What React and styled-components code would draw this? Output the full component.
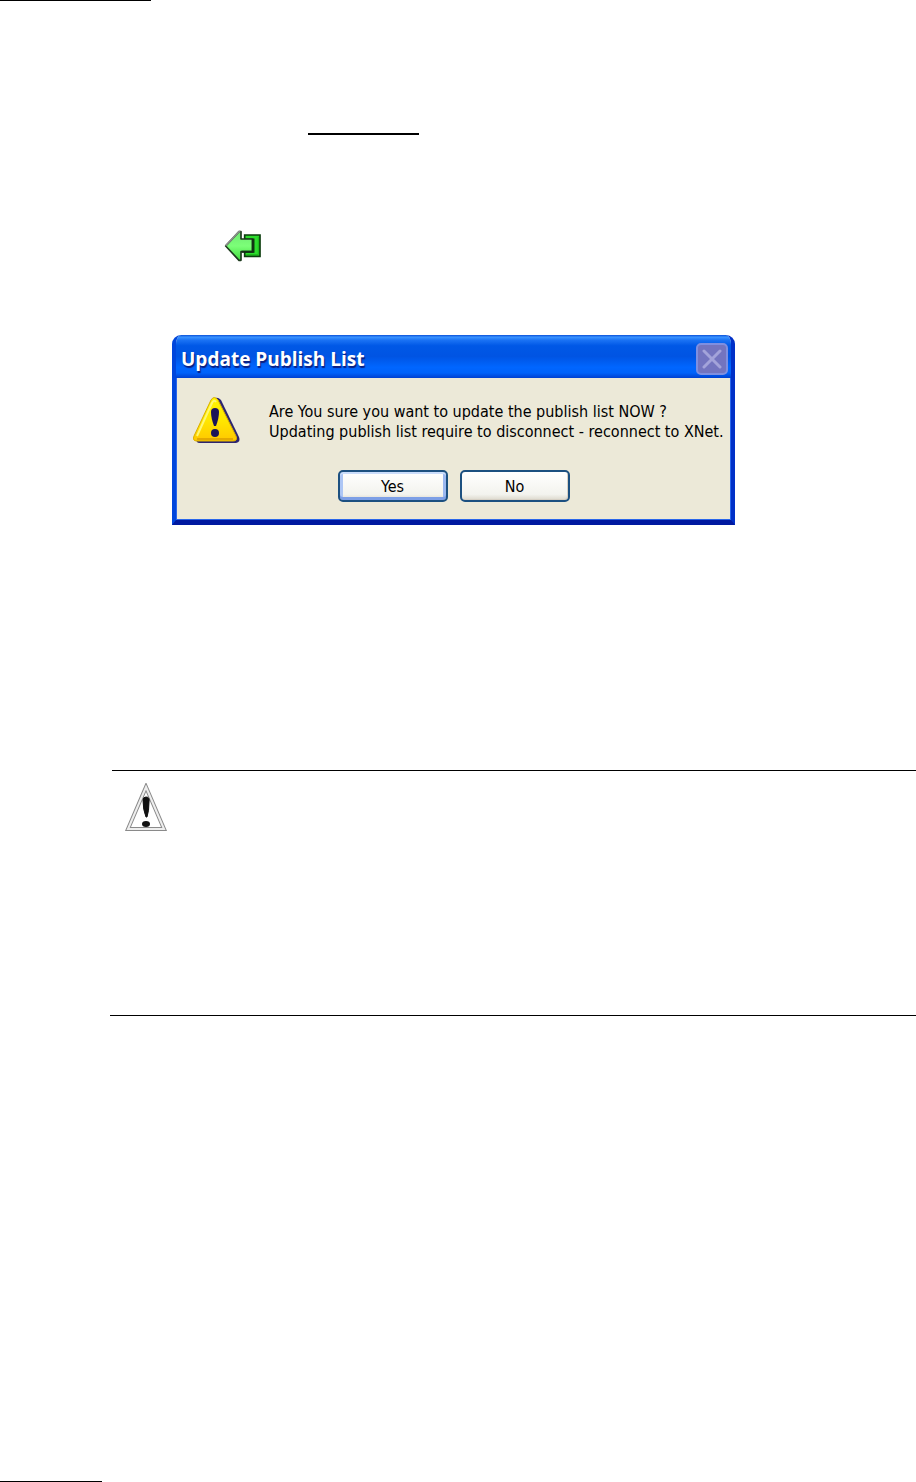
import styled, { createGlobalStyle } from "styled-components";

export default function App() {
    return (
        <>
        <GlobalStyle />
        <Page>
            <Rule $width={151} />
            <Heading>
                <Rule $width={111} $thick={2} />
            </Heading>
            <Step>
                <ArrowIcon />
            </Step>
            <DialogRow>
                <PublishDialog />
            </DialogRow>
            <Note>
                <NoteRule $indent={2} />
                <NoteBody>
                    <CautionIcon />
                </NoteBody>
                <NoteRule />
            </Note>
            <Footer>
                <Rule $width={102} />
            </Footer>
        </Page>
        </>
    )
}

function PublishDialog() {
    return (
        <Dialog role="alertdialog" aria-labelledby="dialog-title" aria-describedby="dialog-text">
            <TitleBar>
                <Title id="dialog-title">Update Publish List</Title>
                <CloseButton type="button" aria-label="Close" disabled>
                    <svg width="20" height="20" viewBox="0 0 20 20">
                        <path d="M2 2L18 18M18 2L2 18" stroke="#a3a3da" strokeWidth="3" strokeLinecap="round" />
                    </svg>
                </CloseButton>
            </TitleBar>
            <Content>
                <MessageRow>
                    <WarningIcon />
                    <Message id="dialog-text">
                        Are You sure you want to update the publish list NOW ?<br />
                        Updating publish list require to disconnect - reconnect to XNet.
                    </Message>
                </MessageRow>
                <Buttons>
                    <Button type="button" $primary>Yes</Button>
                    <Button type="button">No</Button>
                </Buttons>
            </Content>
        </Dialog>
    )
}

function ArrowIcon() {
    return (
        <svg width="38" height="32" viewBox="27 24 114 96" aria-hidden="true">
            <defs>
                <linearGradient id="arrow" x1="0" y1="0" x2="0" y2="1">
                    <stop offset="0" stopColor="#6fe873" />
                    <stop offset="0.5" stopColor="#7cff78" />
                    <stop offset="1" stopColor="#3fdc3c" />
                </linearGradient>
            </defs>
            <path d="M89 39H135V103H89V90H116V52H89Z" fill="#2ddc2d" stroke="#0b3d0d" strokeWidth="5" />
            <path d="M130 44V98H94" fill="none" stroke="#1db81d" strokeWidth="3" />
            <path d="M32 72L72 29H78V51H113V89H78V115H72Z" fill="url(#arrow)" stroke="#1d3a1e" strokeWidth="5" strokeLinejoin="round" />
            <path d="M32 71L72 29H76" fill="none" stroke="#8a918a" strokeWidth="5" />
            <path d="M113 51V89H80" fill="none" stroke="#123014" strokeWidth="6" />
        </svg>
    )
}

function WarningIcon() {
    return (
        <svg width="48" height="48" viewBox="0 0 48 48" aria-hidden="true">
            <defs>
                <linearGradient id="warning" x1="0" y1="0" x2="0" y2="1">
                    <stop offset="0" stopColor="#fff500" />
                    <stop offset="0.5" stopColor="#ffe800" />
                    <stop offset="1" stopColor="#ffc800" />
                </linearGradient>
            </defs>
            <path d="M21 3Q24 0 28 4L46 41Q48 46 43 47H7Q2 47 4 42Z" fill="#2c2570" />
            <path d="M18 4Q21 -1 25 4L43 40Q45 45 40 45H4Q-1 45 1 40Z" fill="url(#warning)" stroke="#d8ae00" />
            <path d="M4 40L19 7Q21 3 23 6" fill="none" stroke="#fff870" strokeWidth="2" />
            <path d="M4 43H40" stroke="#e4a900" strokeWidth="2" />
            <path d="M18 16Q18 12 22 12Q26 12 26 16Q26 22 23 30H21Q18 22 18 16Z" fill="#1c1458" />
            <circle cx="22" cy="37" r="4" fill="#1c1458" />
        </svg>
    )
}

function CautionIcon() {
    return (
        <svg width="44" height="50" viewBox="0 0 44 50" aria-hidden="true">
            <path d="M22 4L40 46H4Z" fill="#fff" stroke="#8a8a8a" strokeWidth="4" />
            <path d="M22 4L40 46H4Z" fill="none" stroke="#eee" strokeWidth="2" />
            <path d="M19 17Q19 14 22 14Q26 14 25 19Q25 28 23 34H22Q19 27 19 17Z" fill="#111" stroke="#111" />
            <ellipse cx="22" cy="41" rx="4" ry="3" fill="#111" />
        </svg>
    )
}

const GlobalStyle = createGlobalStyle`
* {
    box-sizing: border-box;
}
body {
    margin: 0;
    background: #fff;
}
svg {
    display: block;
    flex-shrink: 0;
}
`

const Page = styled.main`
display: flex;
flex-direction: column;
min-height: 100vh;
`

const Rule = styled.hr`
width: ${props => props.$width}px;
height: ${props => props.$thick || 1}px;
margin: 0;
border: 0;
background: #000;
`

const Heading = styled.div`
padding: 132px 0 0 308px;
`

const Step = styled.div`
padding: 95px 0 0 224px;
`

const DialogRow = styled.div`
padding: 73px 181px 0 172px;
`

const Dialog = styled.section`
border: solid;
border-width: 0 4px 5px;
border-color: #0046e0 #0030c8 #0019a0 #0046dc;
border-radius: 9px 9px 0 0;
background: #ece9d8;
font-family: "DejaVu Sans Condensed", "Noto Sans", sans-serif;
overflow: hidden;
`

const TitleBar = styled.header`
display: flex;
align-items: center;
justify-content: space-between;
height: 43px;
margin: 0 -4px;
padding: 4px 7px 0 9px;
background: linear-gradient(#0a50d8 0, #3a93ff 5%, #1a72f4 12%, #0058e6 25%, #0054e3 50%, #0066ff 75%, #0062fa 88%, #0040d0 100%);
`

const Title = styled.h1`
margin: 0;
color: #fff;
font: 700 19px/24px "Open Sans", sans-serif;
text-shadow: 1px 2px 1px #0a1f80;
`

const CloseButton = styled.button`
display: flex;
align-items: center;
justify-content: center;
width: 32px;
height: 32px;
padding: 0;
border: 2px solid #7f8fe0;
border-radius: 5px;
background: #7374bf;
`

const Content = styled.div`
padding: 18px 16px 17px;
border: solid #2a66ea;
border-width: 0 1px 1px;
`

const MessageRow = styled.div`
display: flex;
gap: 28px;
`

const Message = styled.p`
margin: 6px 0 0;
color: #000;
font-size: 16px;
line-height: 20px;
white-space: nowrap;
`

const Buttons = styled.div`
display: flex;
justify-content: center;
gap: 12px;
margin-top: 26px;
`

const Button = styled.button`
width: 110px;
height: 32px;
padding: 2px 0 0;
border: 2px solid #1c5080;
border-radius: 5px;
background: linear-gradient(#fff, #f3f3ee 80%, #dcd8cc);
box-shadow: ${props => props.$primary ? "inset 0 2px #cbddfb, inset 0 -3px #7d9fe6, inset 3px 0 #adc6f5, inset -3px 0 #9bb8f0" : "inset -1px -1px #d6d0c5"};
color: #000;
font-family: inherit;
font-size: 16px;
line-height: 20px;
`

const Note = styled.section`
padding: 245px 0 0 110px;
`

const NoteRule = styled.hr`
height: 1px;
margin: 0 0 0 ${props => props.$indent || 0}px;
border: 0;
background: #000;
`

const NoteBody = styled.div`
min-height: 244px;
padding: 12px 14px;
`

const Footer = styled.footer`
margin-top: auto;
`
